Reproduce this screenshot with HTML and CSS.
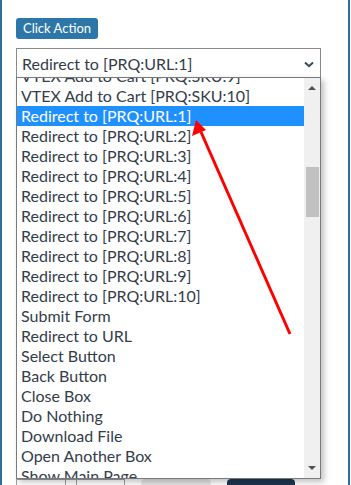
FILE: index.html
```html
<!DOCTYPE html>
<html lang="en">

<head>
    <meta charset="UTF-8">
    <meta name="viewport" content="width=device-width, initial-scale=1.0">
    <title>Click Action</title>
    <link rel="stylesheet" href="styles.css">
</head>

<body>
    <div class="panel">
        <span class="label-badge">Click Action</span>

        <div class="select-wrap">
            <div class="select-box">
                <span>Redirect to [PRQ:URL:1]</span>
                <svg class="chevron" width="10" height="7" viewBox="0 0 10 7">
                    <path d="M1 1.5 L5 5.2 L9 1.5" fill="none" stroke="#34495e" stroke-width="2" />
                </svg>
            </div>

            <div class="dropdown">
                <div class="options">
                    <div class="option">VTEX Add to Cart [PRQ:SKU:9]</div>
                    <div class="option">VTEX Add to Cart [PRQ:SKU:10]</div>
                    <div class="option selected">Redirect to [PRQ:URL:1]</div>
                    <div class="option">Redirect to [PRQ:URL:2]</div>
                    <div class="option">Redirect to [PRQ:URL:3]</div>
                    <div class="option">Redirect to [PRQ:URL:4]</div>
                    <div class="option">Redirect to [PRQ:URL:5]</div>
                    <div class="option">Redirect to [PRQ:URL:6]</div>
                    <div class="option">Redirect to [PRQ:URL:7]</div>
                    <div class="option">Redirect to [PRQ:URL:8]</div>
                    <div class="option">Redirect to [PRQ:URL:9]</div>
                    <div class="option">Redirect to [PRQ:URL:10]</div>
                    <div class="option">Submit Form</div>
                    <div class="option">Redirect to URL</div>
                    <div class="option">Select Button</div>
                    <div class="option">Back Button</div>
                    <div class="option">Close Box</div>
                    <div class="option">Do Nothing</div>
                    <div class="option">Download File</div>
                    <div class="option">Open Another Box</div>
                    <div class="option">Show Main Page</div>
                </div>
                <div class="scrollbar">
                    <span class="arrow-up"></span>
                    <div class="track">
                        <div class="thumb"></div>
                    </div>
                    <span class="arrow-down"></span>
                </div>
            </div>

            <svg class="pointer" width="351" height="485" viewBox="0 0 351 485">
                <line x1="290" y1="334" x2="201" y2="132" stroke="#ff0000" stroke-width="3" />
                <polygon points="196,120 192,136 206,130" fill="#ff0000" />
            </svg>
        </div>

        <div class="below-row">
            <div class="field-group">
                <span class="cell wide"></span>
                <span class="cell small"></span>
                <span class="cell mid"></span>
            </div>
            <span class="btn-light"></span>
            <span class="btn-dark"></span>
        </div>
    </div>
</body>

</html>
```

FILE: styles.css
```css
body {
    margin: 0;
    padding: 0;
    background-color: #fff;
    font-family: Lato, "Open Sans", Arial, sans-serif;
    color: #343d4a;
    overflow: hidden;
}

.panel {
    height: 485px;
    margin-right: 1px;
    border-left: 2px solid #2c6e9c;
    border-right: 2px solid #2c6e9c;
    padding: 17px 0 0 14px;
    box-sizing: border-box;
    position: relative;
    overflow: hidden;
}

.label-badge {
    display: inline-block;
    background-color: #2d77a8;
    color: #fff;
    font-size: 13px;
    line-height: 21px;
    padding: 0 7px;
    border-radius: 3px;
}

.select-wrap {
    margin-top: 9px;
    width: 305px;
}

.select-box {
    height: 30px;
    border: 1px solid #8a8a8a;
    box-sizing: border-box;
    display: flex;
    align-items: center;
    justify-content: space-between;
    padding: 0 6px 0 5px;
    font-size: 16px;
}

.chevron {
    margin-top: 3px;
}

.dropdown {
    position: absolute;
    top: 77px;
    left: 14px;
    width: 305px;
    height: 402px;
    border: 1px solid #7a7a7a;
    box-sizing: border-box;
    background-color: #fff;
    display: flex;
    overflow: hidden;
    box-shadow: 3px 3px 6px rgba(0, 0, 0, 0.25);
    z-index: 2;
}

.options {
    flex: 1;
    margin-top: -12px;
    font-size: 16px;
}

.option {
    height: 20px;
    line-height: 20px;
    padding-left: 4px;
    white-space: nowrap;
}

.option.selected {
    background-color: #1e90ff;
    color: #fff;
}

.scrollbar {
    width: 16px;
    background-color: #f0f0f0;
    display: flex;
    flex-direction: column;
    align-items: center;
}

.arrow-up,
.arrow-down {
    width: 0;
    height: 0;
    border-left: 4px solid transparent;
    border-right: 4px solid transparent;
    margin: 6px 0;
}

.arrow-up {
    border-bottom: 4px solid #505050;
    margin-top: 8px;
}

.arrow-down {
    border-top: 4px solid #505050;
    margin-bottom: 8px;
}

.track {
    flex: 1;
    width: 100%;
    position: relative;
}

.thumb {
    margin: 71px auto 0;
    width: 13px;
    height: 50px;
    background-color: #c1c1c1;
}

.pointer {
    position: absolute;
    top: 0;
    left: -2px;
    z-index: 3;
}

.below-row {
    margin-top: 401px;
    display: flex;
    align-items: flex-start;
    gap: 16px;
}

.field-group {
    display: flex;
    border: 1px solid #a0a0a0;
    height: 30px;
}

.cell {
    height: 30px;
    border-right: 1px solid #a0a0a0;
}

.cell.wide {
    width: 48px;
}

.cell.small {
    width: 10px;
}

.cell.mid {
    width: 47px;
    border-right: none;
}

.btn-light {
    width: 70px;
    height: 30px;
    border-radius: 4px;
    background-color: #e6e6e6;
}

.btn-dark {
    width: 68px;
    height: 30px;
    border-radius: 4px;
    background-color: #1e3650;
}
```
